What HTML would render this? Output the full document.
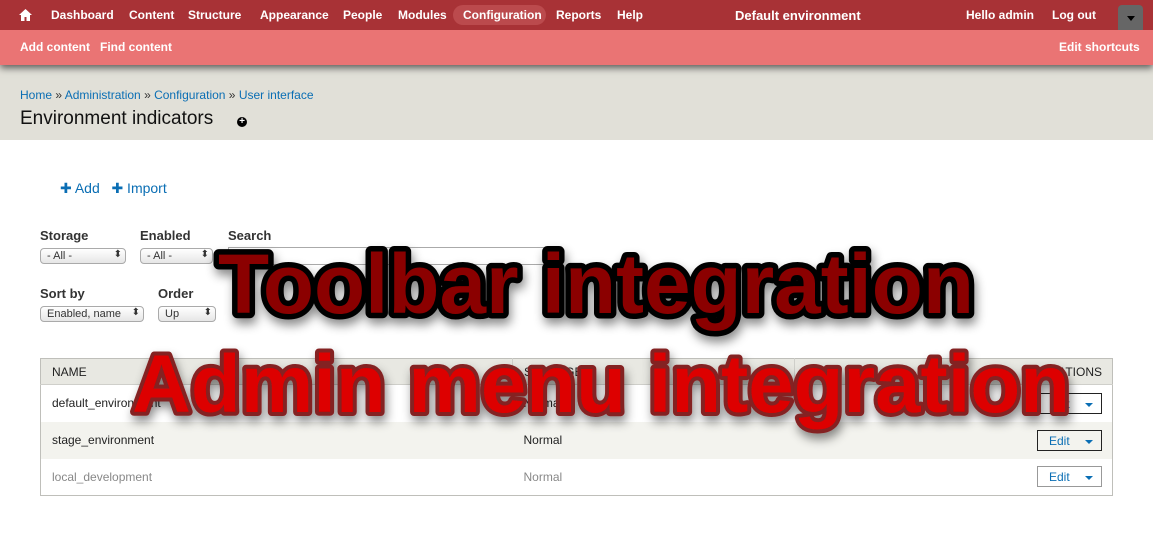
<!DOCTYPE html>
<html><head><meta charset="utf-8"><style>
*{box-sizing:border-box;margin:0;padding:0}
body{width:1153px;height:559px;overflow:hidden;background:#fff;font-family:"Liberation Sans","DejaVu Sans",sans-serif;position:relative;font-size:13px;color:#222}
.tb{position:absolute;left:0;top:0;width:1153px;height:30px;background:#a83236;color:#fff;font-weight:bold;font-size:12px;z-index:3}
.tb span{position:absolute;top:8px}
.sb{position:absolute;left:0;top:30px;width:1153px;height:35px;background:#ea7474;color:#fff;font-weight:bold;font-size:12px;box-shadow:0 3px 7px rgba(0,0,0,.6);z-index:2}
.sb span{position:absolute;top:10px}
.hd{position:absolute;left:0;top:65px;width:1153px;height:75px;background:#e1e0d8;z-index:1}
a{color:#0a6eb4;text-decoration:none}
.abs{position:absolute}
.lbl{font-weight:bold;font-size:13px;color:#333}
.sel{position:absolute;height:16px;border:1px solid #aaa;border-radius:4px;background:linear-gradient(#fff,#e6e6e6);font-size:11px;padding:1px 6px;color:#333}
.sel:after{content:"⬍";position:absolute;right:3px;top:0;font-size:10px}
table{position:absolute;left:40px;top:358px;width:1073px;border-collapse:collapse;border:1px solid #bfbfba}
td,th{height:37px;font-size:12px;text-align:left;padding-left:11px;font-weight:normal}
th{height:26px;background:#e8e8e2;border-bottom:1px solid #cfcfca}
.edit{display:inline-block;width:65px;height:21px;border:1px solid #222;color:#0a6eb4;font-size:12px;padding:3px 0 0 11px;position:relative;text-align:left}
.edit:after{content:"";position:absolute;right:8px;top:9px;border:4px solid transparent;border-top:4px solid #0a6eb4}
</style></head><body>
<div class="tb">
<svg class="abs" style="left:19px;top:9px" width="13" height="12" viewBox="0 0 13 12"><path d="M6.5 0L0 6h2v6h3.5V8h2v4H11V6h2z" fill="#fff"/></svg>
<span style="left:51px">Dashboard</span><span style="left:129px">Content</span><span style="left:188px">Structure</span><span style="left:260px">Appearance</span><span style="left:343px">People</span><span style="left:398px">Modules</span>
<div class="abs" style="left:453px;top:5px;width:93px;height:20px;border-radius:10px;background:#bb4a4d"></div>
<span style="left:463px">Configuration</span><span style="left:556px">Reports</span><span style="left:617px">Help</span>
<span style="left:735px;font-size:13px">Default environment</span><span style="left:966px">Hello admin</span><span style="left:1052px">Log out</span>
<div class="abs" style="left:1118px;top:5px;width:25px;height:25px;background:#666;border-radius:4px 4px 0 0"></div>
<div class="abs" style="left:1127px;top:16px;border:4px solid transparent;border-top:5px solid #000"></div>
</div>
<div class="sb"><span style="left:20px">Add content</span><span style="left:100px">Find content</span><span style="left:1059px">Edit shortcuts</span></div>
<div class="hd">
<div class="abs" style="left:20px;top:23px;font-size:12px;color:#333"><a>Home</a> » <a>Administration</a> » <a>Configuration</a> » <a>User interface</a></div>
<div class="abs" style="left:20px;top:43px;font-size:19px;color:#111">Environment indicators</div>
<div class="abs" style="left:237px;top:52px;width:10px;height:10px;border-radius:50%;background:#000;color:#fff;font-size:10px;line-height:10px;text-align:center;font-weight:bold">+</div>
</div>
<div class="abs" style="left:60px;top:180px;font-size:14px"><a>✚ Add</a> &nbsp; <a>✚ Import</a></div>
<div class="abs lbl" style="left:40px;top:228px">Storage</div>
<div class="abs lbl" style="left:140px;top:228px">Enabled</div>
<div class="abs lbl" style="left:228px;top:228px">Search</div>
<div class="sel" style="left:40px;top:248px;width:86px">- All -</div>
<div class="sel" style="left:140px;top:248px;width:73px">- All -</div>
<div class="abs" style="left:228px;top:247px;width:327px;height:18px;border:1px solid #aaa"></div>
<div class="abs lbl" style="left:40px;top:286px">Sort by</div>
<div class="abs lbl" style="left:158px;top:286px">Order</div>
<div class="sel" style="left:40px;top:306px;width:104px">Enabled, name</div>
<div class="sel" style="left:158px;top:306px;width:58px">Up</div>
<table>
<tr><th>NAME</th><th style="width:282px;border-left:1px solid #cfcfca">STORAGE</th><th style="width:318px;border-left:1px solid #cfcfca;text-align:right;padding-right:10px">OPERATIONS</th></tr>
<tr><td>default_environment</td><td>Normal</td><td style="text-align:right;padding-right:10px"><span class="edit">Edit</span></td></tr>
<tr style="background:#f3f3ee"><td>stage_environment</td><td>Normal</td><td style="text-align:right;padding-right:10px"><span class="edit">Edit</span></td></tr>
<tr style="color:#888"><td>local_development</td><td>Normal</td><td style="text-align:right;padding-right:10px"><span class="edit" style="border-color:#999">Edit</span></td></tr>
</table>
<svg class="abs" style="left:0;top:0;z-index:5" width="1153" height="559">
<defs><filter id="s" x="-10%" y="-30%" width="120%" height="160%"><feDropShadow dx="2" dy="6" stdDeviation="5" flood-opacity=".45"/></filter></defs>
<text x="218" y="313" font-family="Liberation Sans" font-weight="bold" font-size="84" textLength="756" lengthAdjust="spacingAndGlyphs" fill="#8b0000" stroke="#000" stroke-width="11" paint-order="stroke" stroke-linejoin="round" filter="url(#s)">Toolbar integration</text>
<text x="132" y="412" font-family="Liberation Sans" font-weight="bold" font-size="82" textLength="938" lengthAdjust="spacingAndGlyphs" fill="#dd0000" stroke="#842022" stroke-width="8" paint-order="stroke" stroke-linejoin="round" filter="url(#s)">Admin menu integration</text>
</svg>
</body></html>
